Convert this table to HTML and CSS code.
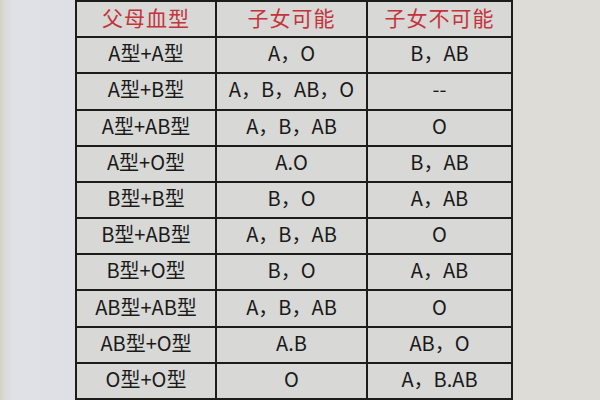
FILE: index.html
```html
<!DOCTYPE html>
<html lang="zh">
<head>
<meta charset="utf-8">
<link rel="stylesheet" href="styles.css">
</head>
<body>
<div class="page">
  <div class="grid">
    <div class="cell head">父母血型</div>
    <div class="cell head">子女可能</div>
    <div class="cell head">子女不可能</div>

    <div class="cell">A型+A型</div>
    <div class="cell">A，O</div>
    <div class="cell">B，AB</div>

    <div class="cell">A型+B型</div>
    <div class="cell">A，B，AB，O</div>
    <div class="cell">--</div>

    <div class="cell">A型+AB型</div>
    <div class="cell">A，B，AB</div>
    <div class="cell">O</div>

    <div class="cell">A型+O型</div>
    <div class="cell">A.O</div>
    <div class="cell">B，AB</div>

    <div class="cell">B型+B型</div>
    <div class="cell">B，O</div>
    <div class="cell">A，AB</div>

    <div class="cell">B型+AB型</div>
    <div class="cell">A，B，AB</div>
    <div class="cell">O</div>

    <div class="cell">B型+O型</div>
    <div class="cell">B，O</div>
    <div class="cell">A，AB</div>

    <div class="cell">AB型+AB型</div>
    <div class="cell">A，B，AB</div>
    <div class="cell">O</div>

    <div class="cell">AB型+O型</div>
    <div class="cell">A.B</div>
    <div class="cell">AB，O</div>

    <div class="cell">O型+O型</div>
    <div class="cell">O</div>
    <div class="cell">A，B.AB</div>
  </div>
</div>
</body>
</html>
```
FILE: styles.css
```css
html, body {
  margin: 0;
  padding: 0;
}
body {
  width: 600px;
  height: 400px;
  overflow: hidden;
  background: linear-gradient(90deg, #d6d2c6 0px, #dcdcdc 6px, #e0e1e6 14px, #dfe0e5 70px, #dcdcda 300px, #dddcd6 520px, #dedcd6 600px);
  font-family: "Noto Sans CJK SC", "Noto Sans", sans-serif;
}
.page {
  padding-left: 75px;
}
.grid {
  width: 434px;
  height: 396px;
  padding: 2px;
  background: #1c1c1c;
  display: grid;
  grid-template-columns: 138px 149px 143px;
  grid-template-rows: repeat(11, 1fr);
  gap: 2px;
}
.cell {
  background: #d8d8d6;
  color: #1a1a1a;
  font-size: 20px;
  font-weight: 400;
  display: flex;
  align-items: center;
  justify-content: center;
  white-space: nowrap;
  line-height: 1;
  padding-bottom: 4px;
}
.head {
  color: #c3343c;
  font-size: 21px;
  letter-spacing: 1px;
}
```
